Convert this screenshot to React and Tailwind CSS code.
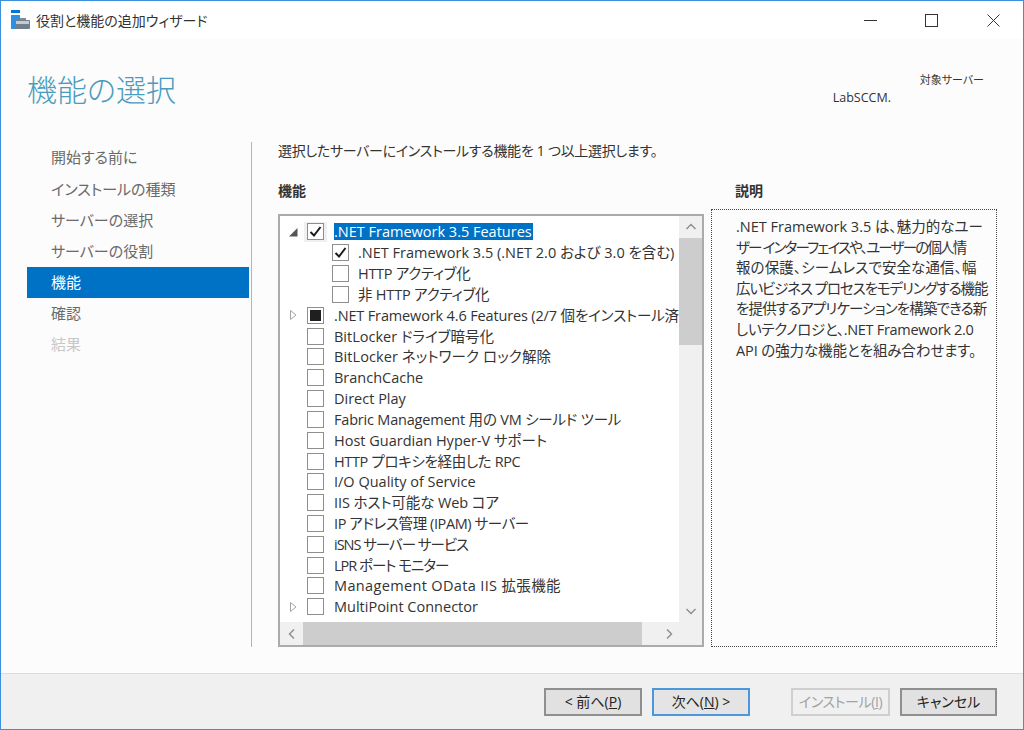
import React from "react";

const steps = [
  { label: "開始する前に" },
  { label: "インストールの種類" },
  { label: "サーバーの選択" },
  { label: "サーバーの役割" },
  { label: "機能", active: true },
  { label: "確認" },
  { label: "結果", disabled: true },
];

const features = [
  { label: ".NET Framework 3.5 Features", state: "checked", expander: "open", selected: true },
  { label: ".NET Framework 3.5 (.NET 2.0 および 3.0 を含む)", state: "checked", level: 1 },
  { label: "HTTP アクティブ化", level: 1, tracking: "tracking-[-0.3px]" },
  { label: "非 HTTP アクティブ化", level: 1, tracking: "tracking-[-0.2px]" },
  { label: ".NET Framework 4.6 Features (2/7 個をインストール済", state: "partial", expander: "closed", tracking: "tracking-[-0.15px]" },
  { label: "BitLocker ドライブ暗号化" },
  { label: "BitLocker ネットワーク ロック解除", tracking: "tracking-[0.1px]" },
  { label: "BranchCache" },
  { label: "Direct Play" },
  { label: "Fabric Management 用の VM シールド ツール", tracking: "tracking-[-0.2px]" },
  { label: "Host Guardian Hyper-V サポート" },
  { label: "HTTP プロキシを経由した RPC", tracking: "tracking-[-0.35px]" },
  { label: "I/O Quality of Service" },
  { label: "IIS ホスト可能な Web コア", tracking: "tracking-[-0.1px]" },
  { label: "IP アドレス管理 (IPAM) サーバー", tracking: "tracking-[-0.4px]" },
  { label: "iSNS サーバー サービス", tracking: "tracking-[-1px]" },
  { label: "LPR ポート モニター", tracking: "tracking-[-1px]" },
  { label: "Management OData IIS 拡張機能", tracking: "tracking-[0.35px]" },
  { label: "MultiPoint Connector", expander: "closed" },
];

const descriptionLines = [
  { text: ".NET Framework 3.5 は、魅力的なユー" },
  { text: "ザー インターフェイスや、ユーザーの個人情", tracking: "tracking-[-1.8px]" },
  { text: "報の保護、シームレスで安全な通信、幅", tracking: "tracking-[0.1px]" },
  { text: "広いビジネス プロセスをモデリングする機能", tracking: "tracking-[-1.1px]" },
  { text: "を提供するアプリケーションを構築できる新", tracking: "tracking-[-0.85px]" },
  { text: "しいテクノロジと、.NET Framework 2.0", tracking: "tracking-[-0.3px]" },
  { text: "API の強力な機能とを組み合わせます。", tracking: "tracking-[-0.1px]" },
];

const Chevron = ({ d }) => (
  <svg width="12" height="12" viewBox="0 0 12 12" fill="none" stroke="#8c8c8c" strokeWidth="1.4">
    <path d={d} />
  </svg>
);

const Expander = ({ type }) => {
  if (type === "open") {
    return (
      <svg width="10" height="10" viewBox="0 0 10 10">
        <path d="M9.5 1V9.5H1Z" fill="#555" />
      </svg>
    );
  }
  if (type === "closed") {
    return (
      <svg width="10" height="12" viewBox="0 0 10 12" fill="none" stroke="#a6a6a6">
        <path d="M2.5 1.5L8 6L2.5 10.5Z" />
      </svg>
    );
  }
  return null;
};

const Checkbox = ({ state }) => (
  <span className="flex h-[17px] w-[17px] shrink-0 items-center justify-center border border-[#8e8e8e] bg-white">
    {state === "checked" && (
      <svg width="13" height="13" viewBox="0 0 13 13" fill="none" stroke="#1a1a1a" strokeWidth="2">
        <path d="M1.5 7L5 10.5L11.5 2" />
      </svg>
    )}
    {state === "partial" && <span className="h-[11px] w-[11px] bg-[#1f1f1f]" />}
  </span>
);

const FeatureRow = ({ label, state, expander, level, selected, tracking = "" }) => (
  <div className={`flex h-[20.83px] items-center ${level ? "pl-[52px]" : "pl-[8px]"}`}>
    {!level && (
      <span className="flex w-[19px] shrink-0 items-center justify-start">
        <Expander type={expander} />
      </span>
    )}
    <span className={`flex h-[20px] items-center ${selected ? "bg-[#f0f0f0] px-[3px] -mx-[3px]" : ""}`}>
      <Checkbox state={state} />
    </span>
    <span
      className={`whitespace-nowrap text-[14.5px] leading-[17px] ${level ? "ml-[9px]" : "ml-[10px]"} ${tracking} ${
        selected ? "bg-[#0072c6] text-white pr-[1px]" : "text-[#333]"
      }`}
    >
      {label}
    </span>
  </div>
);

const FooterButton = ({ children, width, primary, disabled, className = "" }) => (
  <button
    className={`flex h-[28px] items-center justify-center whitespace-nowrap border-2 text-[14px] ${width} ${className} ${
      primary
        ? "border-[#4a97db] bg-[#e4e4e4] text-[#222]"
        : disabled
          ? "border-[#cfcfcf] bg-[#f0f0f0] text-[#a2a2a2]"
          : "border-[#8f8f8f] bg-[#e1e1e1] text-[#222]"
    }`}
  >
    {children}
  </button>
);

export default function App() {
  return (
    <div className="flex h-[730px] w-[1024px] flex-col overflow-hidden border border-[#3c8fdc] bg-[#fcfcfc] font-['Open_Sans','Noto_Sans_CJK_JP',sans-serif] [font-feature-settings:'palt']">
      <div className="flex h-[38px] shrink-0 items-center bg-white pl-[10px]">
        <svg width="20" height="20" viewBox="0 0 20 20">
          <rect x="0" y="0" width="9" height="3" fill="#0078d7" />
          <rect x="0" y="5" width="9" height="14" fill="#2f8fe0" />
          <rect x="4" y="10" width="15" height="9" rx="1" fill="#6f7f8c" />
          <rect x="5" y="11" width="13" height="3" fill="#c3ccd3" />
          <rect x="9" y="8" width="6" height="2" fill="#7f8b95" />
        </svg>
        <span className="ml-[5px] text-[14px] text-[#333]">役割と機能の追加ウィザード</span>
        <div className="ml-auto flex items-center">
          <span className="flex w-[47px] justify-center">
            <svg width="13" height="13" viewBox="0 0 13 13" stroke="#333">
              <path d="M0 6.5H13" />
            </svg>
          </span>
          <span className="ml-[14px] flex w-[47px] justify-center">
            <svg width="13" height="13" viewBox="0 0 13 13" fill="none" stroke="#333">
              <rect x="0.5" y="0.5" width="12" height="12" />
            </svg>
          </span>
          <span className="ml-[15px] mr-[6px] flex w-[47px] justify-center">
            <svg width="13" height="13" viewBox="0 0 13 13" stroke="#333">
              <path d="M0.5 0.5L12.5 12.5M12.5 0.5L0.5 12.5" />
            </svg>
          </span>
        </div>
      </div>

      <div className="flex h-[103px] shrink-0 items-start justify-between pl-[26px] pr-[39px]">
        <h1 className="mt-[30px] text-[30px] font-light leading-[42px] text-[#4a9bbd]">機能の選択</h1>
        <div className="mt-[32px] flex flex-col items-end leading-[18px] text-[#333]">
          <span className="text-[11px]">対象サーバー</span>
          <span className="mr-[93px] text-[12.5px]">LabSCCM.</span>
        </div>
      </div>

      <div className="flex flex-1">
        <nav className="ml-[26px] flex w-[222px] shrink-0 flex-col">
          {steps.map((step) => (
            <div
              key={step.label}
              className={`flex h-[31.2px] items-center pl-[24px] text-[15px] ${
                step.active
                  ? "bg-[#0072c6] text-white"
                  : step.disabled
                    ? "text-[#c8c8c8]"
                    : "text-[#6a6a6a]"
              }`}
            >
              {step.label}
            </div>
          ))}
        </nav>
        <div className="ml-[2px] h-[505px] w-[1px] bg-[#b4b4b4]" />

        <div className="ml-[26px] flex flex-col">
          <p className="text-[14px] leading-[18px] tracking-[-0.3px] text-[#333]">選択したサーバーにインストールする機能を 1 つ以上選択します。</p>
          <div className="mt-[21px] flex">
            <div className="w-[426px]">
              <h2 className="text-[14px] font-bold leading-[20px] text-[#333]">機能</h2>
              <div className="mt-[13px] flex h-[433px] flex-col border-2 border-[#ababab] bg-white">
                <div className="flex min-h-0 flex-1">
                  <div className="min-w-0 flex-1 overflow-hidden pt-[5.5px]">
                    {features.map((f) => (
                      <FeatureRow key={f.label} {...f} />
                    ))}
                  </div>
                  <div className="flex w-[23px] shrink-0 flex-col bg-[#f0f0f0]">
                    <div className="flex h-[22px] items-center justify-center">
                      <Chevron d="M1.5 8L6 3.5L10.5 8" />
                    </div>
                    <div className="h-[107px] bg-[#cdcdcd]" />
                    <div className="mt-auto flex h-[22px] items-center justify-center">
                      <Chevron d="M1.5 4L6 8.5L10.5 4" />
                    </div>
                  </div>
                </div>
                <div className="flex h-[23px] shrink-0 bg-[#f0f0f0]">
                  <div className="flex w-[23px] items-center justify-center">
                    <Chevron d="M8 1.5L3.5 6L8 10.5" />
                  </div>
                  <div className="w-[339px] bg-[#cdcdcd]" />
                  <div className="flex w-[38px] items-center pl-[21px]">
                    <Chevron d="M4 1.5L8.5 6L4 10.5" />
                  </div>
                </div>
              </div>
            </div>

            <div className="ml-[7px] w-[286px]">
              <h2 className="pl-[24px] text-[14px] font-bold leading-[20px] text-[#333]">説明</h2>
              <div className="mt-[8px] h-[438px] border border-dotted border-[#444] pl-[24px] pr-[8px] pt-[7px] text-[14.5px] leading-[20.6px] text-[#333]">
                {descriptionLines.map((line) => (
                  <div key={line.text} className={`whitespace-nowrap ${line.tracking || ""}`}>
                    {line.text}
                  </div>
                ))}
              </div>
            </div>
          </div>
        </div>
      </div>

      <div className="flex h-[56px] shrink-0 items-center border-t border-t-[#dcdcdc] bg-[#f0f0f0]">
        <FooterButton width="w-[98px]" className="ml-[543px]">
          &lt; 前へ(<u>P</u>)
        </FooterButton>
        <FooterButton width="w-[98px]" className="ml-[10px]" primary>
          次へ(<u>N</u>) &gt;
        </FooterButton>
        <FooterButton width="w-[99px]" className="ml-[41px] tracking-[-0.4px]" disabled>
          インストール(<u>I</u>)
        </FooterButton>
        <FooterButton width="w-[97px]" className="ml-[10px]">
          キャンセル
        </FooterButton>
      </div>
    </div>
  );
}
